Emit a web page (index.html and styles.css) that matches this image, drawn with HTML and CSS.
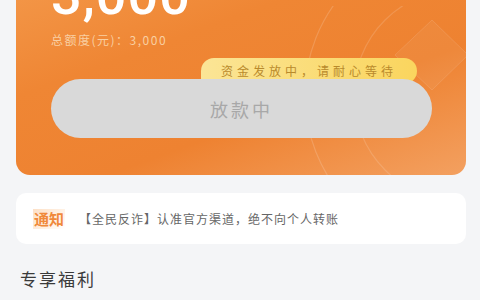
FILE: index.html
```html
<!DOCTYPE html>
<html lang="zh-CN">
<head>
    <meta charset="UTF-8">
    <meta name="viewport" content="width=device-width, initial-scale=1.0">
    <title>放款进度</title>
    <link rel="stylesheet" href="styles.css">
</head>
<body>
    <div class="card">
        <svg class="card-deco" width="200" height="200" viewBox="0 0 200 200">
            <circle cx="194" cy="89" r="155" fill="none" stroke="#ffffff" stroke-opacity="0.16" stroke-width="1.2"/>
            <circle cx="194" cy="89" r="106" fill="none" stroke="#ffffff" stroke-opacity="0.14" stroke-width="1.2"/>
            <path d="M129 49 L166 14 L202 49 L166 84 Z" fill="#ffffff" fill-opacity="0.05" stroke="#ffffff" stroke-opacity="0.12"/>
        </svg>
        <div class="amount">3,000</div>
        <div class="total">总额度(元)：3,000</div>
        <div class="status">
            <div class="tip">资金发放中，请耐心等待</div>
            <button class="btn" disabled>放款中</button>
        </div>
    </div>

    <div class="notice">
        <span class="notice-tag">通知</span>
        <span class="notice-text">【全民反诈】认准官方渠道，绝不向个人转账</span>
    </div>

    <div class="section-title">专享福利</div>
</body>
</html>
```

FILE: styles.css
```css
body {
    margin: 0;
    background-color: #f4f5f7;
    font-family: "Noto Sans CJK SC", "Noto Sans", sans-serif;
    overflow: hidden;
}
.card {
    position: relative;
    overflow: hidden;
    margin: -34px 14px 0 16px;
    padding: 0 34px 37px 35px;
    border-radius: 14px;
    background: linear-gradient(160deg, #f49a4c 0%, #ef8634 35%, #ee8231 65%, #f3a060 100%);
}
.card-deco {
    position: absolute;
    right: 0;
    top: 40px;
}
.amount {
    position: relative;
    font-family: Roboto, "Noto Sans", sans-serif;
    font-size: 54px;
    line-height: 60px;
    font-weight: 500;
    color: #fff;
    letter-spacing: 1px;
}
.total {
    position: relative;
    margin-top: 5px;
    font-size: 12px;
    line-height: 18px;
    color: #f9cfa2;
    letter-spacing: 1.5px;
}
.status {
    position: relative;
    margin-top: 30px;
}
.tip {
    position: absolute;
    right: 15px;
    top: -21px;
    height: 26px;
    padding: 0 20px;
    border-radius: 13px 13px 13px 4px;
    background: linear-gradient(90deg, #fbe596, #fad55e);
    color: #b98a2c;
    font-size: 12px;
    line-height: 26px;
    letter-spacing: 4px;
}
.btn {
    position: relative;
    display: block;
    width: 100%;
    height: 59px;
    border: none;
    border-radius: 30px;
    background-color: #d9d9d9;
    color: #a8a8a8;
    font-family: inherit;
    font-size: 18px;
    letter-spacing: 3px;
}
.notice {
    display: flex;
    align-items: center;
    gap: 14px;
    height: 51px;
    margin: 18px 14px 0 16px;
    padding: 0 17px;
    border-radius: 10px;
    background-color: #fff;
}
.notice-tag {
    padding: 0 1px;
    font-size: 15px;
    font-weight: 700;
    color: #f0893a;
    background: linear-gradient(135deg, #fde0c6 0%, #fff1e4 60%, #ffffff 100%);
    line-height: 20px;
}
.notice-text {
    font-size: 12px;
    color: #666;
    letter-spacing: 1px;
}
.section-title {
    margin-top: 22px;
    padding-left: 20px;
    font-size: 17px;
    color: #3a3a3a;
    letter-spacing: 2px;
}
```
